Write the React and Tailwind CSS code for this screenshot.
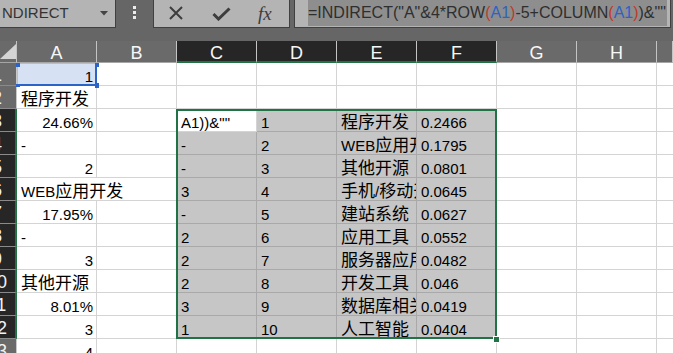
import React from 'react';

const CJK = /([\u3400-\u9fff]+)/;

// cell text: latin runs in Liberation Sans, CJK runs a bit larger like Excel's DengXian
function Txt({ s }) {
  return s.split(CJK).map((p, i) =>
    i % 2 === 1 ? (
      <span key={i} className="text-[17px] leading-[10px] font-['Noto_Sans_CJK_SC',sans-serif]">
        {p}
      </span>
    ) : (
      <React.Fragment key={i}>{p}</React.Fragment>
    )
  );
}

const colA = [
  ['1', true], ['程序开发', false], ['24.66%', true], ['-', false], ['2', true],
  ['WEB应用开发', false], ['17.95%', true], ['-', false], ['3', true], ['其他开源', false],
  ['8.01%', true], ['3', true], ['4', true],
];
const colC = ['A1))&""', '-', '-', '3', '-', '2', '2', '2', '3', '1'];
const colE = ['程序开发', 'WEB应用开发', '其他开源', '手机/移动开发', '建站系统', '应用工具', '服务器应用', '开发工具', '数据库相关', '人工智能'];
const colF = ['0.2466', '0.1795', '0.0801', '0.0645', '0.0627', '0.0552', '0.0482', '0.046', '0.0419', '0.0404'];

function Cell({ v = '', right, tone, spill }) {
  const look =
    tone === 'gray'
      ? 'bg-[#c6c6c6] border-[#a9a9a9]'
      : tone === 'active'
      ? 'bg-[#d6e1f3] border-[#d4d4d4]'
      : 'border-[#d4d4d4]';
  return (
    <div
      className={`${look} ${spill ? 'overflow-visible relative z-10' : 'overflow-hidden border-r'} ${
        right ? 'text-right pr-[3px] pl-[4px]' : 'px-[4px]'
      } w-[80px] h-[23px] shrink-0 border-b pt-[5px] leading-[17px] whitespace-nowrap text-[15px] text-black`}
    >
      <Txt s={v} />
    </div>
  );
}

function RowHead({ n, sel }) {
  return (
    <div
      className={`w-[17px] h-[23px] shrink-0 overflow-hidden border-b border-b-[#8a8a8a] ${
        sel ? 'bg-[#262626] border-r-2 border-r-[#217346]' : 'bg-[#6a6a6a] border-r border-r-[#c8c8c8]'
      }`}
    >
      <div className="w-[36px] -ml-[21px] text-center text-[18px] leading-[18px] pt-[3px] text-[#f2f2f2]">{n}</div>
    </div>
  );
}

function ColHead({ l, sel, w = 'w-[80px]' }) {
  return (
    <div
      className={`${w} h-[22px] shrink-0 overflow-hidden border-r border-r-[#c4c4c4] text-center text-[18px] leading-[18px] pt-[3px] text-[#f7f7f7] ${
        sel ? 'bg-[#262626] border-b-2 border-b-[#217346]' : 'bg-[#6a6a6a] border-b border-b-[#a6a6a6]'
      }`}
    >
      {l}
    </div>
  );
}

function Formula() {
  const red = 'text-[#c0392b]';
  const blue = 'text-[#2f62c4]';
  return (
    <span className="bg-[#8e8e8e] h-[26px] leading-[26px] pr-[1px] text-[16px] text-[#2e2e2e] whitespace-nowrap">
      =INDIRECT("A"&amp;4*ROW<span className={red}>(</span>
      <span className={blue}>A1</span>
      <span className={red}>)</span>-5+COLUMN<span className={red}>(</span>
      <span className={blue}>A1</span>
      <span className={red}>)</span>)&amp;""
    </span>
  );
}

export default function App() {
  return (
    <div className="relative w-[673px] h-[353px] overflow-hidden bg-white font-['Liberation_Sans','Noto_Sans_CJK_SC',sans-serif]">
      {/* formula bar */}
      <div className="h-[41px] bg-[#666666] flex items-start">
        <div className="w-[116px] h-[28px] shrink-0 bg-[#b4b4b4] border-r border-b border-[#404040] flex items-center pl-[2px] pr-[7px] text-[15px] text-[#333]">
          <span className="flex-1">NDIRECT</span>
          <svg width="8" height="5" viewBox="0 0 8 5">
            <polygon points="0,0 8,0 4,4.5" fill="#444" />
          </svg>
        </div>
        <div className="w-[37px] h-[28px] shrink-0 flex flex-col items-center pt-[6px] gap-[2px]">
          <div className="w-[3px] h-[3px] bg-[#ececec]" />
          <div className="w-[3px] h-[3px] bg-[#ececec]" />
          <div className="w-[3px] h-[3px] bg-[#ececec]" />
        </div>
        <div className="w-[137px] h-[28px] shrink-0 bg-[#b4b4b4] border border-t-0 border-[#404040] flex items-center pl-[14px]">
          <svg width="16" height="16" viewBox="0 0 16 16" className="mt-[-1px]">
            <path d="M2 2L14 14M14 2L2 14" stroke="#3d3d3d" strokeWidth="2" />
          </svg>
          <svg width="19" height="14" viewBox="0 0 19 14" className="ml-[28px]">
            <path d="M1.5 7L6.5 12L17.5 1.5" stroke="#3d3d3d" strokeWidth="3" fill="none" />
          </svg>
          <span className="ml-[27px] font-['Liberation_Serif',serif] italic text-[19px] text-[#3d3d3d] leading-none">fx</span>
        </div>
        <div className="w-[4px] shrink-0" />
        <div className="w-[377px] h-[28px] shrink-0 bg-[#b4b4b4] border border-t-0 border-[#404040] pl-[13px] flex items-start overflow-hidden">
          <Formula />
        </div>
      </div>

      {/* column headers */}
      <div className="flex">
        <div className="w-[17px] h-[22px] shrink-0 bg-[#6a6a6a] border-r border-r-[#c4c4c4] border-b border-b-[#a6a6a6] flex items-end justify-end pb-[3px]">
          <svg width="16" height="15" viewBox="0 0 16 15">
            <polygon points="0,15 16,0 16,15" fill="#d4d4d4" />
          </svg>
        </div>
        {['A', 'B', 'C', 'D', 'E', 'F', 'G', 'H'].map((l, i) => (
          <ColHead key={l} l={l} sel={i >= 2 && i <= 5} />
        ))}
        <ColHead l="" w="w-[16px]" />
      </div>

      {/* rows */}
      {colA.map(([a, r], i) => {
        const sel = i >= 2 && i <= 11;
        const k = i - 2;
        return (
          <div key={i} className="flex">
            <RowHead n={i + 1} sel={sel} />
            <Cell v={a} right={r} tone={i === 0 ? 'active' : undefined} spill={i === 5} />
            <Cell />
            <Cell v={sel ? colC[k] : ''} tone={sel && i !== 2 ? 'gray' : undefined} />
            <Cell v={sel ? String(k + 1) : ''} tone={sel ? 'gray' : undefined} />
            <Cell v={sel ? colE[k] : ''} tone={sel ? 'gray' : undefined} />
            <Cell v={sel ? colF[k] : ''} tone={sel ? 'gray' : undefined} />
            <Cell />
            <Cell />
            <Cell />
          </div>
        );
      })}

      {/* A1 selection */}
      <div className="absolute left-[17px] top-[63px] w-[80px] h-[23px] border-t border-l border-[#a9bfe6] border-r-2 border-r-[#2b63c9] border-b-2 border-b-[#2b63c9]" />
      <div className="absolute left-[16px] top-[63px] w-[4px] h-[4px] bg-[#2b63c9]" />
      <div className="absolute left-[95px] top-[63px] w-[4px] h-[4px] bg-[#2b63c9]" />
      <div className="absolute left-[16px] top-[84px] w-[4px] h-[3px] bg-[#2b63c9]" />
      <div className="absolute left-[95px] top-[83px] w-[4px] h-[5px] bg-[#2b63c9]" />

      {/* C3:F12 range */}
      <div className="absolute left-[176px] top-[109px] w-[321px] h-[230px] border-2 border-[#217346]" />
      <div className="absolute left-[493px] top-[336px] w-[7px] h-[7px] bg-[#217346] border border-white" />
    </div>
  );
}
